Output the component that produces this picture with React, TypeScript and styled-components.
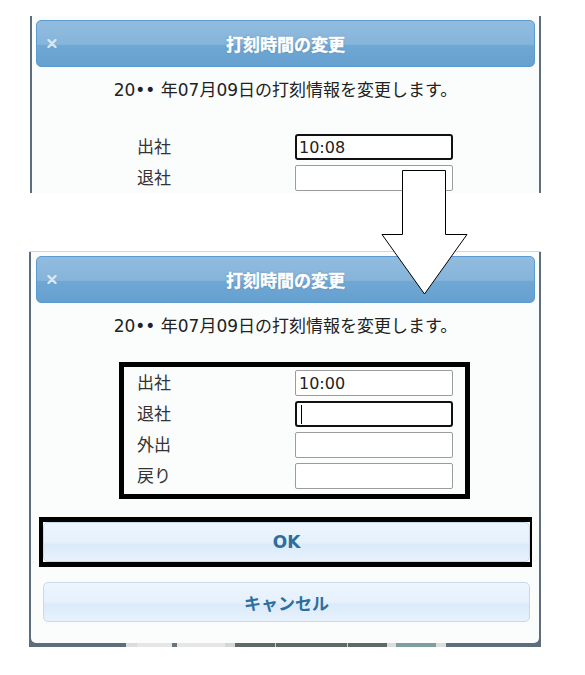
import React from "react";
import styled, { createGlobalStyle } from "styled-components";

const GlobalStyle = createGlobalStyle`
  html, body {
    margin: 0;
    padding: 0;
    background: #fff;
  }
  body {
    font-family: "DejaVu Sans", "Noto Sans CJK JP", sans-serif;
    color: #222;
  }
`;

const Page = styled.div`
  position: relative;
  width: 585px;
  height: 675px;
  box-sizing: border-box;
  padding: 16px 0 0 29px;
`;

const Frame = styled.section<{ $clip?: number; $gap?: number; $inset?: number }>`
  display: flex;
  flex-direction: column;
  width: ${(p) => 512 - (p.$inset ?? 0)}px;
  margin-top: ${(p) => p.$gap ?? 0}px;
  margin-left: ${(p) => p.$inset ?? 0}px;
  ${(p) => (p.$clip ? `height: ${p.$clip}px; overflow: hidden;` : "")}
`;

const Body = styled.div<{ $edge?: boolean }>`
  background: #5d6d7e;
  padding: 0 2px;
  border-top: ${(p) => (p.$edge ? "1px solid #d2d6da" : "none")};
`;

const Sheet = styled.div<{ $padLeft?: number }>`
  background: #fbfdfd;
  padding: 4px 4px 21px ${(p) => p.$padLeft ?? 5}px;
  border-radius: 0 0 5px 5px;
`;

const TitleBar = styled.header`
  display: grid;
  grid-template-columns: 1fr auto 1fr;
  align-items: center;
  height: 47px;
  box-sizing: border-box;
  border: 1px solid #5b9bd2;
  border-radius: 5px;
  background: linear-gradient(
    to bottom,
    #91bcdf 0%,
    #86b4da 52%,
    #70a8d4 54%,
    #66a0cf 100%
  );
`;

const Close = styled.span`
  display: flex;
  padding-left: 10px;
`;

const Title = styled.h2`
  margin: 0;
  color: #fff;
  font-family: "Noto Sans CJK JP", sans-serif;
  font-size: 17px;
  font-weight: 700;
  line-height: 20px;
  -webkit-text-stroke: 0.4px #fff;
  text-shadow: 0 0 2px rgba(40, 80, 120, 0.6);
`;

const Lead = styled.p`
  margin: 13px 0 0;
  text-align: center;
  font-size: 17px;
  line-height: 20px;
  color: #222;
`;

const FormBox = styled.div<{ $marked?: boolean }>`
  display: grid;
  grid-template-columns: 158px 158px;
  row-gap: 5px;
  width: 351px;
  box-sizing: border-box;
  margin: 26px 0 0 83px;
  padding: 3px 12px 5px 13px;
  border: 5px solid ${(p) => (p.$marked ? "#000" : "transparent")};
`;

const Label = styled.span`
  font-size: 17px;
  line-height: 26px;
  color: #333;
`;

const Field = styled.div<{ $active?: boolean }>`
  display: flex;
  align-items: center;
  height: 26px;
  box-sizing: border-box;
  padding: 0 ${(p) => (p.$active ? 2 : 3)}px;
  background: #fff;
  border: ${(p) => (p.$active ? "2px solid #111" : "1px solid #9c9c9c")};
  border-radius: ${(p) => (p.$active ? 3 : 2)}px;
  font-size: 16px;
  color: #222;
`;

const Caret = styled.span`
  display: inline-block;
  width: 1px;
  height: 19px;
  margin-left: 2px;
  background: #000;
`;

const Marker = styled.div`
  width: fit-content;
  margin: 18px 0 0 3px;
  border-style: solid;
  border-color: #000;
  border-width: 5px 2px 5px 4px;
`;

const ActionButton = styled.button<{ $top?: number; $left?: number }>`
  display: block;
  width: 487px;
  height: 40px;
  box-sizing: border-box;
  margin: ${(p) => p.$top ?? 0}px 0 0 ${(p) => p.$left ?? 0}px;
  border: 1px solid #c5dbec;
  border-radius: 5px;
  background: linear-gradient(
    to bottom,
    #ecf5fe 0%,
    #e6f1fc 50%,
    #dbeaf9 56%,
    #e7f2fd 100%
  );
  color: #2e6e9e;
  font-family: "DejaVu Sans", "Noto Sans CJK JP", sans-serif;
  font-size: 17px;
  font-weight: 700;
`;

const Strip = styled.div`
  display: flex;
  height: 4px;
`;

const Segment = styled.span<{ $w: number; $c: string }>`
  flex: 0 0 ${(p) => p.$w}px;
  background: ${(p) => p.$c};
`;

const Arrow = styled.svg`
  position: absolute;
  left: 380px;
  top: 169px;
`;

const stripParts: [number, string][] = [
  [97, "#5d6d7e"],
  [11, "#dcdcdc"],
  [35, "#e6e6e6"],
  [5, "#6a7480"],
  [48, "#e6e6e6"],
  [10, "#d6d6d6"],
  [40, "#5f6a67"],
  [1, "#c9cfcf"],
  [71, "#5f6a67"],
  [1, "#c9cfcf"],
  [39, "#5f6a67"],
  [9, "#dcdcdc"],
  [40, "#7e9ea0"],
  [10, "#dcdcdc"],
  [95, "#5d6d7e"],
];

type Row = { label: string; value?: string; active?: boolean };

const DialogHead: React.FC = () => (
  <>
    <TitleBar>
      <Close>
        <svg width="10" height="9" viewBox="0 0 10 9">
          <path
            d="M1.5 1 L8.5 8 M8.5 1 L1.5 8"
            stroke="#dae7f3"
            strokeWidth="2.4"
            strokeLinecap="round"
          />
        </svg>
      </Close>
      <Title>打刻時間の変更</Title>
      <span />
    </TitleBar>
    <Lead>20•• 年07月09日の打刻情報を変更します。</Lead>
  </>
);

const Rows: React.FC<{ rows: Row[]; marked?: boolean }> = ({ rows, marked }) => (
  <FormBox $marked={marked}>
    {rows.map((r) => (
      <React.Fragment key={r.label}>
        <Label>{r.label}</Label>
        <Field $active={r.active}>
          {r.value}
          {r.active && !r.value && <Caret />}
        </Field>
      </React.Fragment>
    ))}
  </FormBox>
);

const App: React.FC = () => {
  return (
    <Page>
      <GlobalStyle />
      <Frame $clip={177} $inset={1}>
        <Body>
          <Sheet $padLeft={4}>
            <DialogHead />
            <Rows
              rows={[
                { label: "出社", value: "10:08", active: true },
                { label: "退社" },
              ]}
            />
          </Sheet>
        </Body>
      </Frame>

      <Frame $gap={58}>
        <Body $edge>
          <Sheet>
            <DialogHead />
            <Rows
              marked
              rows={[
                { label: "出社", value: "10:00" },
                { label: "退社", active: true },
                { label: "外出" },
                { label: "戻り" },
              ]}
            />
            <Marker>
              <ActionButton>OK</ActionButton>
            </Marker>
            <ActionButton $top={15} $left={7}>
              キャンセル
            </ActionButton>
          </Sheet>
        </Body>
        <Strip>
          {stripParts.map(([w, c], i) => (
            <Segment key={i} $w={w} $c={c} />
          ))}
        </Strip>
      </Frame>

      <Arrow width="89" height="128" viewBox="0 0 89 128">
        <polygon
          points="22.5,1.5 65.5,1.5 65.5,65.5 87,65.5 44.5,125 2,65.5 22.5,65.5"
          fill="#fff"
          stroke="#000"
          strokeWidth="1"
        />
      </Arrow>
    </Page>
  );
};

export default App;
